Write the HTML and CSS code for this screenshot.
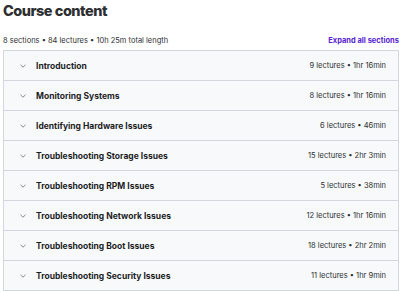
FILE: index.html
```html
<!DOCTYPE html>
<html>
  <head>
    <link rel="stylesheet" href="styles.css">
    <title>Course content</title>
  </head>
  <body>
    <h2 class="title">Course content</h2>

    <div class="meta">
      <span>8 sections • 84 lectures • 10h 25m total length</span>
      <button class="expand">Expand all sections</button>
    </div>

    <div class="sections">
      <div class="section">
        <span class="chev"><svg width="6" height="4" viewBox="0 0 6 4"><path d="M0.5 0.8 L3 3.2 L5.5 0.8" fill="none" stroke="#6a6f73" stroke-width="0.8"/></svg></span>
        <span class="name">Introduction</span>
        <span class="info">9 lectures • 1hr 16min</span>
      </div>
      <div class="section">
        <span class="chev"><svg width="6" height="4" viewBox="0 0 6 4"><path d="M0.5 0.8 L3 3.2 L5.5 0.8" fill="none" stroke="#6a6f73" stroke-width="0.8"/></svg></span>
        <span class="name">Monitoring Systems</span>
        <span class="info">8 lectures • 1hr 16min</span>
      </div>
      <div class="section">
        <span class="chev"><svg width="6" height="4" viewBox="0 0 6 4"><path d="M0.5 0.8 L3 3.2 L5.5 0.8" fill="none" stroke="#6a6f73" stroke-width="0.8"/></svg></span>
        <span class="name">Identifying Hardware Issues</span>
        <span class="info">6 lectures • 46min</span>
      </div>
      <div class="section">
        <span class="chev"><svg width="6" height="4" viewBox="0 0 6 4"><path d="M0.5 0.8 L3 3.2 L5.5 0.8" fill="none" stroke="#6a6f73" stroke-width="0.8"/></svg></span>
        <span class="name">Troubleshooting Storage Issues</span>
        <span class="info">15 lectures • 2hr 3min</span>
      </div>
      <div class="section">
        <span class="chev"><svg width="6" height="4" viewBox="0 0 6 4"><path d="M0.5 0.8 L3 3.2 L5.5 0.8" fill="none" stroke="#6a6f73" stroke-width="0.8"/></svg></span>
        <span class="name">Troubleshooting RPM Issues</span>
        <span class="info">5 lectures • 38min</span>
      </div>
      <div class="section">
        <span class="chev"><svg width="6" height="4" viewBox="0 0 6 4"><path d="M0.5 0.8 L3 3.2 L5.5 0.8" fill="none" stroke="#6a6f73" stroke-width="0.8"/></svg></span>
        <span class="name">Troubleshooting Network Issues</span>
        <span class="info">12 lectures • 1hr 16min</span>
      </div>
      <div class="section">
        <span class="chev"><svg width="6" height="4" viewBox="0 0 6 4"><path d="M0.5 0.8 L3 3.2 L5.5 0.8" fill="none" stroke="#6a6f73" stroke-width="0.8"/></svg></span>
        <span class="name">Troubleshooting Boot Issues</span>
        <span class="info">18 lectures • 2hr 2min</span>
      </div>
      <div class="section">
        <span class="chev"><svg width="6" height="4" viewBox="0 0 6 4"><path d="M0.5 0.8 L3 3.2 L5.5 0.8" fill="none" stroke="#6a6f73" stroke-width="0.8"/></svg></span>
        <span class="name">Troubleshooting Security Issues</span>
        <span class="info">11 lectures • 1hr 9min</span>
      </div>
    </div>
  </body>
</html>
```

FILE: styles.css
```css
body{
  margin: 0;
  padding: 0 0 0 3px;
  background-color: white;
  color: #2d2f31;
  font-family: Inter, "Noto Sans", sans-serif;
  overflow: hidden;
}

.title{
  margin: 0;
  padding-top: 3px;
  height: 27px;
  font-size: 14.5px;
  font-weight: 800;
  letter-spacing: -0.5px;
  line-height: 16px;
}

.meta{
  display: flex;
  justify-content: space-between;
  align-items: center;
  height: 20px;
  padding-right: 1px;
  font-size: 7.5px;
  color: #2d2f31;
}

.expand{
  border: none;
  background: none;
  padding: 0;
  color: #5624d0;
  font-family: Inter, "Noto Sans", sans-serif;
  font-size: 7.5px;
  font-weight: 700;
  cursor: pointer;
}

.sections{
  width: 394px;
  border: 1px solid #d1d7dc;
  border-top: none;
}

.section{
  display: flex;
  align-items: center;
  height: 29px;
  border-top: 1px solid #d1d7dc;
  background-color: #f7f9fa;
  padding-left: 16px;
  padding-right: 12px;
}

.chev{
  display: flex;
  width: 16px;
}

.name{
  flex: 1;
  font-size: 8.5px;
  font-weight: 700;
  color: #1c1d1f;
}

.info{
  font-size: 7.5px;
  color: #2d2f31;
}
```
